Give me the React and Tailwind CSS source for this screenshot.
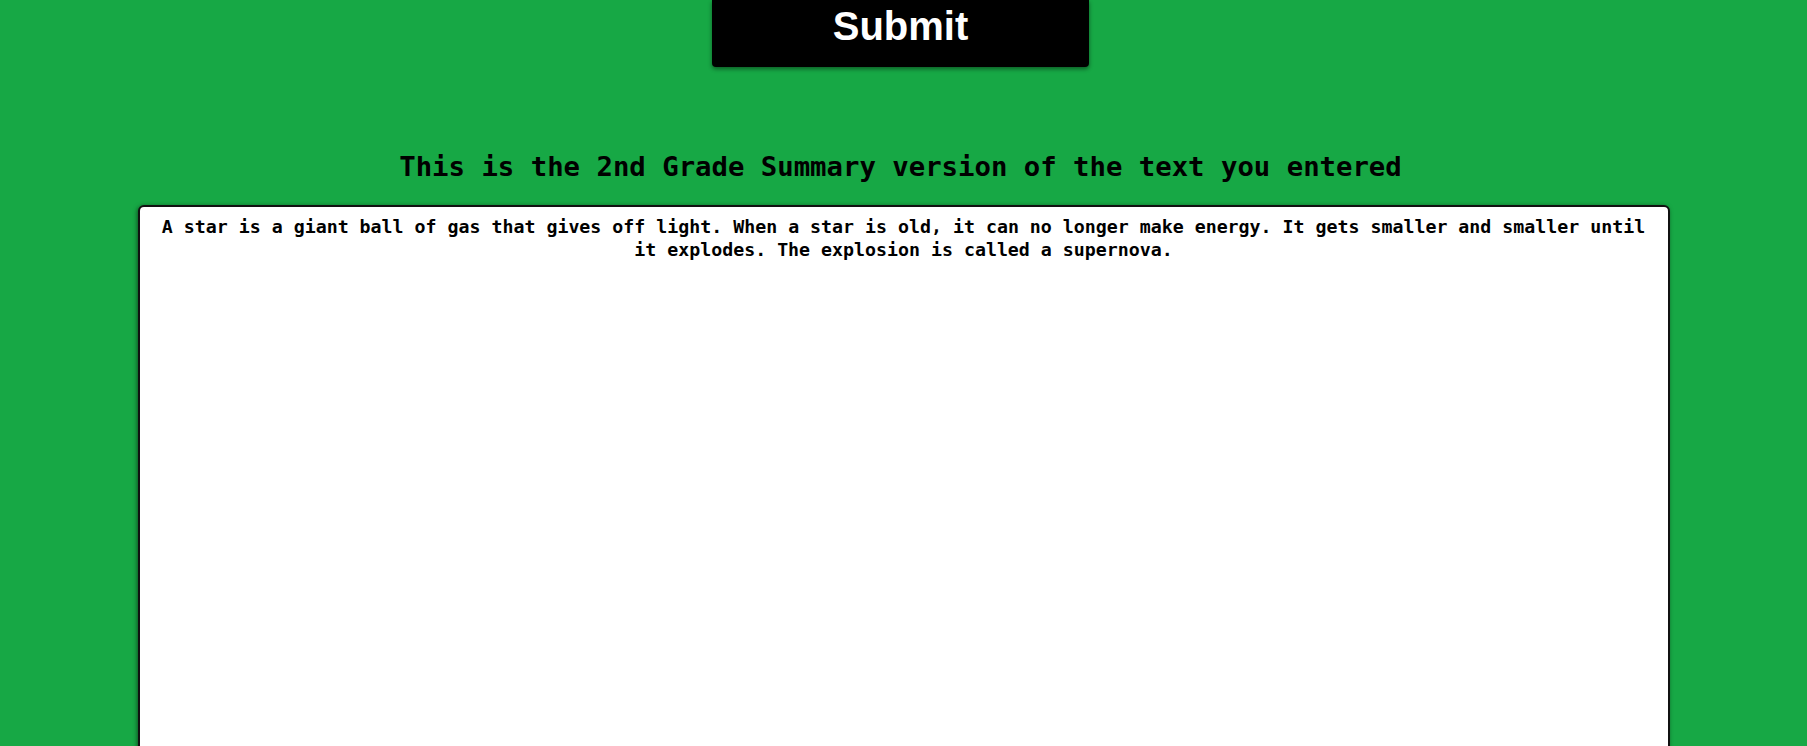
import React from 'react';

const summary =
    'A star is a giant ball of gas that gives off light. When a star is old, it can no longer make energy. It gets smaller and smaller until it explodes. The explosion is called a supernova.';

export default function App() {
    return (
        <div className="h-[746px] w-full overflow-hidden bg-[#17a845] flex flex-col items-center">
            {/* Submit button (top is scrolled out of view) */}
            <button className="shrink-0 w-[377px] h-[67px] pt-[6px] bg-black text-white rounded-b-[4px] shadow-[0_2px_4px_rgba(0,0,0,0.45)] font-['Liberation_Sans',Arial,sans-serif] font-bold text-[40px] leading-[40px] flex justify-center items-start -translate-x-[3px]">
                Submit
            </button>

            <h2 className="shrink-0 mt-[83px] font-['DejaVu_Sans_Mono',monospace] font-bold text-[27.3px] leading-[34px] text-black -translate-x-[3px]">
                This is the 2nd Grade Summary version of the text you entered
            </h2>

            <div className="shrink-0 mt-[21px] w-[1532px] h-[620px] bg-white border-2 border-[#111] rounded-[6px] shadow-[-1px_1px_4px_rgba(0,0,0,0.5)] px-[16px] pt-[8px] text-center font-['DejaVu_Sans_Mono',monospace] font-bold text-[18.26px] leading-[23px] text-black">
                {summary}
            </div>
        </div>
    );
}
